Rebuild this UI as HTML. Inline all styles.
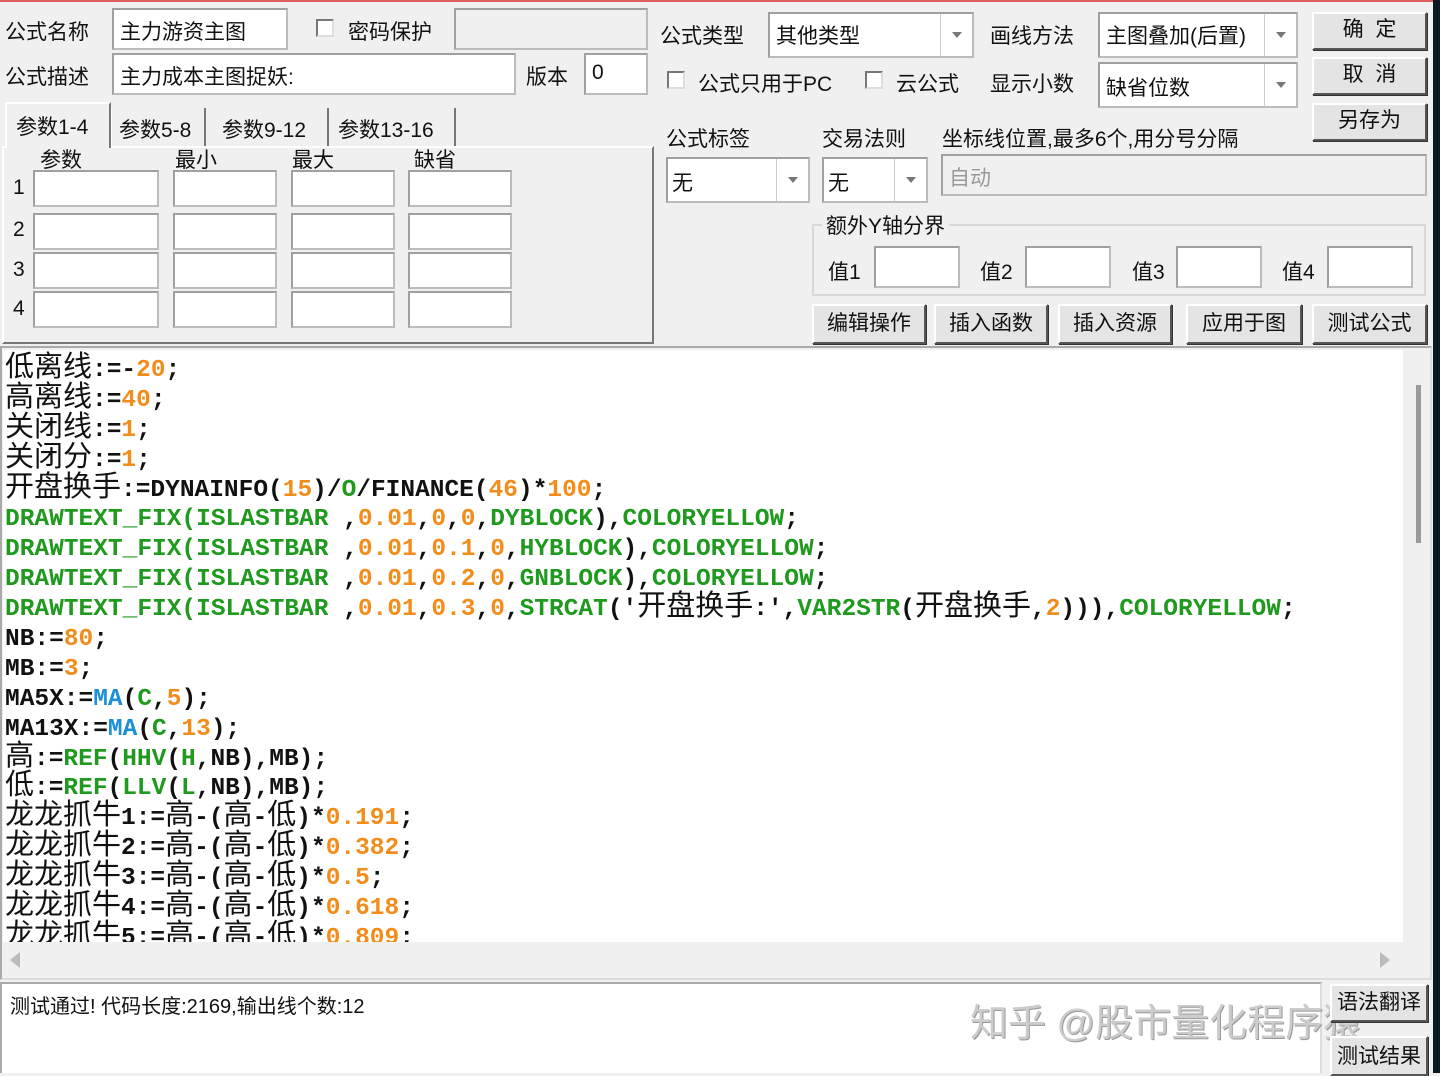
<!DOCTYPE html>
<html><head><meta charset="utf-8"><style>
*{margin:0;padding:0;box-sizing:border-box}
body{width:1440px;height:1073px;background:#f0f0f0;position:relative;overflow:hidden;font-family:"Liberation Sans","Noto Sans CJK SC",sans-serif;font-size:21px;color:#111}
.a{position:absolute;white-space:nowrap}
.in{position:absolute;background:#fff;border:2px solid #bcbcbc;border-top-color:#a0a0a0;border-left-color:#a0a0a0}
.dis{background:#f0f0f0}
.btn{position:absolute;background:#e4e4e4;border:2px solid #555;border-top-color:#fff;border-left-color:#fff;box-shadow:1px 1px 0 #333;text-align:center;font-size:21px;line-height:32px}
.cb{position:absolute;width:18px;height:18px;background:#fff;border:2px solid #777;border-right-color:#ddd;border-bottom-color:#ddd}
.dd{position:absolute;right:0;top:0;bottom:0;width:32px;border-left:1px solid #ccc}
.dd:after{content:"";position:absolute;left:11px;top:18px;border:5px solid transparent;border-top:6px solid #777}
#code{position:absolute;left:3px;top:350px;width:1400px;height:592px;background:#fff;overflow:hidden;font-family:"Liberation Mono",monospace;font-weight:bold;font-size:24.5px;line-height:29.9px;padding-left:2px;padding-top:6px}
#code div{height:29.9px;white-space:pre;line-height:29.9px;overflow:visible}
.c{font-family:"Noto Sans CJK SC",sans-serif;font-weight:normal;font-size:29px;letter-spacing:0;line-height:0}
.o{color:#f28c1a}.g{color:#1f9a1f}.b{color:#1c8fd6}
</style></head><body>
<div class="a" style="left:0;top:0;width:1440px;height:2px;background:#e06060"></div>
<div class="a" style="left:5px;top:16px">公式名称</div>
<div class="in" style="left:112px;top:8px;width:176px;height:42px"></div>
<div class="a" style="left:120px;top:16px">主力游资主图</div>
<div class="cb" style="left:316px;top:19px"></div>
<div class="a" style="left:348px;top:16px">密码保护</div>
<div class="in dis" style="left:454px;top:8px;width:194px;height:42px"></div>
<div class="a" style="left:5px;top:61px">公式描述</div>
<div class="in" style="left:112px;top:53px;width:404px;height:42px"></div>
<div class="a" style="left:120px;top:61px">主力成本主图捉妖:</div>
<div class="a" style="left:526px;top:61px">版本</div>
<div class="in" style="left:584px;top:53px;width:64px;height:42px"></div>
<div class="a" style="left:592px;top:61px">0</div>
<!-- tabs -->
<div class="a" style="left:2px;top:146px;width:652px;height:198px;border:2px solid #fff;border-right-color:#777;border-bottom-color:#777"></div>
<div class="a" style="left:5px;top:102px;width:106px;height:46px;background:#f0f0f0;border:2px solid #fff;border-bottom:none;border-right-color:#777"></div>
<div class="a" style="left:16px;top:111px">参数1-4</div>
<div class="a" style="left:111px;top:108px;width:95px;height:38px;border-left:1px solid #fff;border-right:2px solid #777"></div>
<div class="a" style="left:119px;top:114px">参数5-8</div>
<div class="a" style="left:214px;top:108px;width:115px;height:38px;border-right:2px solid #777"></div>
<div class="a" style="left:222px;top:114px">参数9-12</div>
<div class="a" style="left:330px;top:108px;width:126px;height:38px;border-right:2px solid #777"></div>
<div class="a" style="left:338px;top:114px">参数13-16</div>
<div class="a" style="left:40px;top:144px">参数</div>
<div class="a" style="left:175px;top:144px">最小</div>
<div class="a" style="left:292px;top:144px">最大</div>
<div class="a" style="left:414px;top:144px">缺省</div>
<div class="a" style="left:13px;top:176px">1</div><div class="a" style="left:13px;top:218px">2</div><div class="a" style="left:13px;top:258px">3</div><div class="a" style="left:13px;top:297px">4</div>
<div class="in" style="left:33px;top:170px;width:126px;height:37px"></div><div class="in" style="left:173px;top:170px;width:104px;height:37px"></div><div class="in" style="left:291px;top:170px;width:104px;height:37px"></div><div class="in" style="left:408px;top:170px;width:104px;height:37px"></div>
<div class="in" style="left:33px;top:213px;width:126px;height:37px"></div><div class="in" style="left:173px;top:213px;width:104px;height:37px"></div><div class="in" style="left:291px;top:213px;width:104px;height:37px"></div><div class="in" style="left:408px;top:213px;width:104px;height:37px"></div>
<div class="in" style="left:33px;top:252px;width:126px;height:37px"></div><div class="in" style="left:173px;top:252px;width:104px;height:37px"></div><div class="in" style="left:291px;top:252px;width:104px;height:37px"></div><div class="in" style="left:408px;top:252px;width:104px;height:37px"></div>
<div class="in" style="left:33px;top:291px;width:126px;height:37px"></div><div class="in" style="left:173px;top:291px;width:104px;height:37px"></div><div class="in" style="left:291px;top:291px;width:104px;height:37px"></div><div class="in" style="left:408px;top:291px;width:104px;height:37px"></div>
<!-- right top -->
<div class="a" style="left:660px;top:20px">公式类型</div>
<div class="in" style="left:768px;top:12px;width:206px;height:46px"><div class="dd"></div></div>
<div class="a" style="left:776px;top:20px">其他类型</div>
<div class="a" style="left:990px;top:20px">画线方法</div>
<div class="in" style="left:1098px;top:12px;width:200px;height:46px"><div class="dd"></div></div>
<div class="a" style="left:1106px;top:20px">主图叠加(后置)</div>
<div class="cb" style="left:667px;top:71px"></div>
<div class="a" style="left:698px;top:68px">公式只用于PC</div>
<div class="cb" style="left:865px;top:71px"></div>
<div class="a" style="left:896px;top:68px">云公式</div>
<div class="a" style="left:990px;top:68px">显示小数</div>
<div class="in" style="left:1098px;top:62px;width:200px;height:46px"><div class="dd"></div></div>
<div class="a" style="left:1106px;top:72px">缺省位数</div>
<div class="btn" style="left:1312px;top:12px;width:115px;height:38px">确&nbsp;&nbsp;定</div>
<div class="btn" style="left:1312px;top:57px;width:115px;height:38px">取&nbsp;&nbsp;消</div>
<div class="btn" style="left:1312px;top:103px;width:115px;height:38px">另存为</div>
<div class="a" style="left:666px;top:123px">公式标签</div>
<div class="a" style="left:822px;top:123px">交易法则</div>
<div class="a" style="left:942px;top:123px">坐标线位置,最多6个,用分号分隔</div>
<div class="in" style="left:666px;top:157px;width:144px;height:46px"><div class="dd"></div></div>
<div class="a" style="left:672px;top:167px">无</div>
<div class="in" style="left:822px;top:157px;width:106px;height:46px"><div class="dd"></div></div>
<div class="a" style="left:828px;top:167px">无</div>
<div class="in dis" style="left:941px;top:154px;width:486px;height:42px"></div>
<div class="a" style="left:949px;top:162px;color:#999">自动</div>
<div class="a" style="left:812px;top:224px;width:614px;height:72px;border:2px solid #d8d8d8"></div>
<div class="a" style="left:822px;top:210px;background:#f0f0f0;padding:0 4px">额外Y轴分界</div>
<div class="a" style="left:828px;top:256px">值1</div><div class="in" style="left:874px;top:246px;width:86px;height:42px"></div>
<div class="a" style="left:980px;top:256px">值2</div><div class="in" style="left:1025px;top:246px;width:86px;height:42px"></div>
<div class="a" style="left:1132px;top:256px">值3</div><div class="in" style="left:1176px;top:246px;width:86px;height:42px"></div>
<div class="a" style="left:1282px;top:256px">值4</div><div class="in" style="left:1327px;top:246px;width:86px;height:42px"></div>
<div class="btn" style="left:812px;top:304px;width:114px;height:40px;line-height:36px">编辑操作</div>
<div class="btn" style="left:934px;top:304px;width:114px;height:40px;line-height:36px">插入函数</div>
<div class="btn" style="left:1058px;top:304px;width:114px;height:40px;line-height:36px">插入资源</div>
<div class="btn" style="left:1186px;top:304px;width:116px;height:40px;line-height:36px">应用于图</div>
<div class="btn" style="left:1312px;top:304px;width:115px;height:40px;line-height:36px">测试公式</div>
<!-- code -->
<div class="a" style="left:0;top:346px;width:1432px;height:634px;border:2px solid #aaa;border-right-color:#ddd;border-bottom-color:#ddd"></div>
<div id="code">
<div><span class="c">低离线</span>:=-<span class="o">20</span>;</div>
<div><span class="c">高离线</span>:=<span class="o">40</span>;</div>
<div><span class="c">关闭线</span>:=<span class="o">1</span>;</div>
<div><span class="c">关闭分</span>:=<span class="o">1</span>;</div>
<div><span class="c">开盘换手</span>:=DYNAINFO(<span class="o">15</span>)/<span class="g">O</span>/FINANCE(<span class="o">46</span>)*<span class="o">100</span>;</div>
<div><span class="g">DRAWTEXT_FIX(ISLASTBAR</span> ,<span class="o">0.01</span>,<span class="o">0</span>,<span class="o">0</span>,<span class="g">DYBLOCK</span>),<span class="g">COLORYELLOW</span>;</div>
<div><span class="g">DRAWTEXT_FIX(ISLASTBAR</span> ,<span class="o">0.01</span>,<span class="o">0.1</span>,<span class="o">0</span>,<span class="g">HYBLOCK</span>),<span class="g">COLORYELLOW</span>;</div>
<div><span class="g">DRAWTEXT_FIX(ISLASTBAR</span> ,<span class="o">0.01</span>,<span class="o">0.2</span>,<span class="o">0</span>,<span class="g">GNBLOCK</span>),<span class="g">COLORYELLOW</span>;</div>
<div><span class="g">DRAWTEXT_FIX(ISLASTBAR</span> ,<span class="o">0.01</span>,<span class="o">0.3</span>,<span class="o">0</span>,<span class="g">STRCAT</span>('<span class="c">开盘换手</span>:',<span class="g">VAR2STR</span>(<span class="c">开盘换手</span>,<span class="o">2</span>))),<span class="g">COLORYELLOW</span>;</div>
<div>NB:=<span class="o">80</span>;</div>
<div>MB:=<span class="o">3</span>;</div>
<div>MA5X:=<span class="b">MA</span>(<span class="g">C</span>,<span class="o">5</span>);</div>
<div>MA13X:=<span class="b">MA</span>(<span class="g">C</span>,<span class="o">13</span>);</div>
<div><span class="c">高</span>:=<span class="g">REF</span>(<span class="g">HHV</span>(<span class="g">H</span>,NB),MB);</div>
<div><span class="c">低</span>:=<span class="g">REF</span>(<span class="g">LLV</span>(<span class="g">L</span>,NB),MB);</div>
<div><span class="c">龙龙抓牛</span>1:=<span class="c">高</span>-(<span class="c">高</span>-<span class="c">低</span>)*<span class="o">0.191</span>;</div>
<div><span class="c">龙龙抓牛</span>2:=<span class="c">高</span>-(<span class="c">高</span>-<span class="c">低</span>)*<span class="o">0.382</span>;</div>
<div><span class="c">龙龙抓牛</span>3:=<span class="c">高</span>-(<span class="c">高</span>-<span class="c">低</span>)*<span class="o">0.5</span>;</div>
<div><span class="c">龙龙抓牛</span>4:=<span class="c">高</span>-(<span class="c">高</span>-<span class="c">低</span>)*<span class="o">0.618</span>;</div>
<div><span class="c">龙龙抓牛</span>5:=<span class="c">高</span>-(<span class="c">高</span>-<span class="c">低</span>)*<span class="o">0.809</span>;</div>
</div>
<div class="a" style="left:1403px;top:350px;width:27px;height:595px;background:#f0f0f0"></div>
<div class="a" style="left:1416px;top:385px;width:5px;height:158px;background:#999"></div>
<div class="a" style="left:3px;top:942px;width:1427px;height:35px;background:#f0f0f0"></div>
<div class="a" style="left:10px;top:952px;border:8px solid transparent;border-right:10px solid #bbb;border-left:none"></div>
<div class="a" style="left:1380px;top:952px;border:8px solid transparent;border-left:10px solid #bbb;border-right:none"></div>
<!-- bottom -->
<div class="a" style="left:0;top:982px;width:1322px;height:91px;background:#fff;border:2px solid #aaa;border-right-color:#ddd;border-bottom:none"></div>
<div class="a" style="left:10px;top:990px;font-size:20px">测试通过! 代码长度:2169,输出线个数:12</div>
<div class="a" style="left:970px;top:992px;font-size:38px;color:#ccc;text-shadow:1px 1px 0 #999">知乎 @股市量化程序猿</div>
<div class="btn" style="left:1330px;top:984px;width:98px;height:38px;line-height:34px">语法翻译</div>
<div class="btn" style="left:1330px;top:1036px;width:98px;height:40px;line-height:38px">测试结果</div>
<div class="a" style="left:1433px;top:0;width:7px;height:1073px;background:#0a1a22"></div>
</body></html>
